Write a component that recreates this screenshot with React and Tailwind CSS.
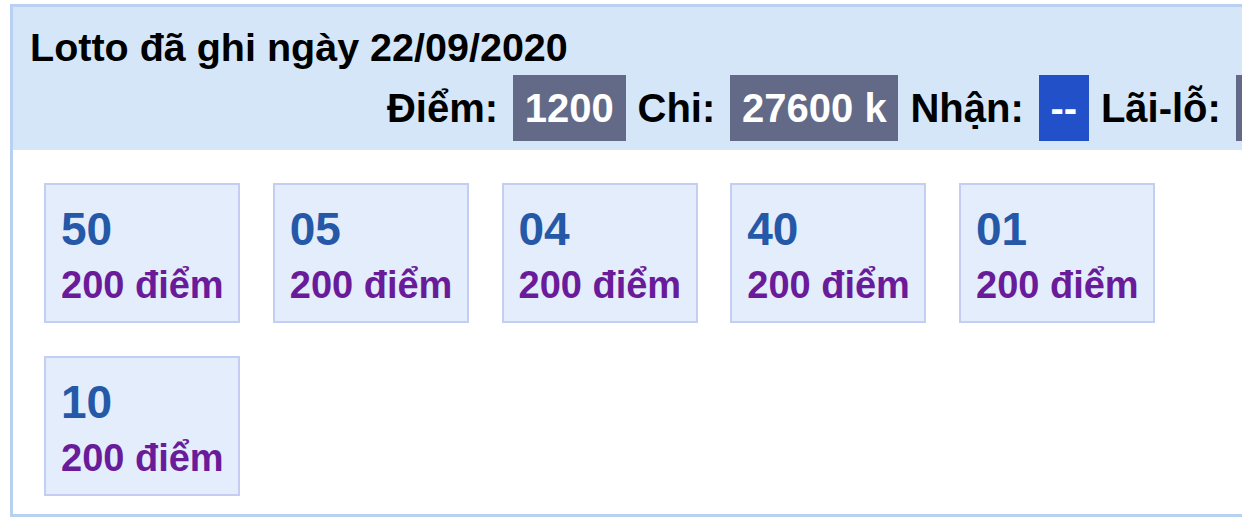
import React from "react";

const picks = [
    { so: "50", diem: 200 },
    { so: "05", diem: 200 },
    { so: "04", diem: 200 },
    { so: "40", diem: 200 },
    { so: "01", diem: 200 },
    { so: "10", diem: 200 },
];

const Stat = ({ label, value, blue }) => (
    <div className="flex items-center">
        <span className="mr-[15px]">{label}</span>
        <span
            className={
                "flex h-[66px] items-center px-[11.75px] text-white " +
                (blue ? "bg-[#2150c8]" : "bg-[#636a87]")
            }
        >
            {value}
        </span>
    </div>
);

const App = () => {
    return (
        <div className="overflow-hidden bg-white pl-[10px] pt-[4px] font-['Liberation_Sans',Arial,sans-serif]">
            <div className="w-[1296px] border-[3px] border-[#b8d1f2]">
                {/* header */}
                <div className="bg-[#d4e6f8] px-[17px] pt-[18px] pb-[9px] font-bold text-black">
                    <h1 className="text-[39.5px] leading-[44px]">Lotto đã ghi ngày 22/09/2020</h1>
                    <div className="mt-[6px] flex justify-end gap-[12px] text-[40px] leading-[46px]">
                        <Stat label="Điểm:" value="1200" />
                        <Stat label="Chi:" value="27600 k" />
                        <Stat label="Nhận:" value="--" blue />
                        <Stat label="Lãi-lỗ:" value="--" />
                    </div>
                </div>

                {/* list */}
                <div className="grid grid-cols-[repeat(5,196px)] gap-x-[32.75px] gap-y-[33px] px-[31px] pt-[33px] pb-[18px]">
                    {picks.map((p) => (
                        <div
                            key={p.so}
                            className="h-[140px] border-2 border-[#c4cef3] bg-[#e3edfc] pl-[15px] pt-[19px] font-bold"
                        >
                            <div className="text-[46px] leading-[50px] text-[#2559a8]">{p.so}</div>
                            <div className="mt-[10px] text-[38px] leading-[42px] text-[#6a1b9a]">
                                {p.diem} điểm
                            </div>
                        </div>
                    ))}
                </div>
            </div>
        </div>
    );
};

export default App;
